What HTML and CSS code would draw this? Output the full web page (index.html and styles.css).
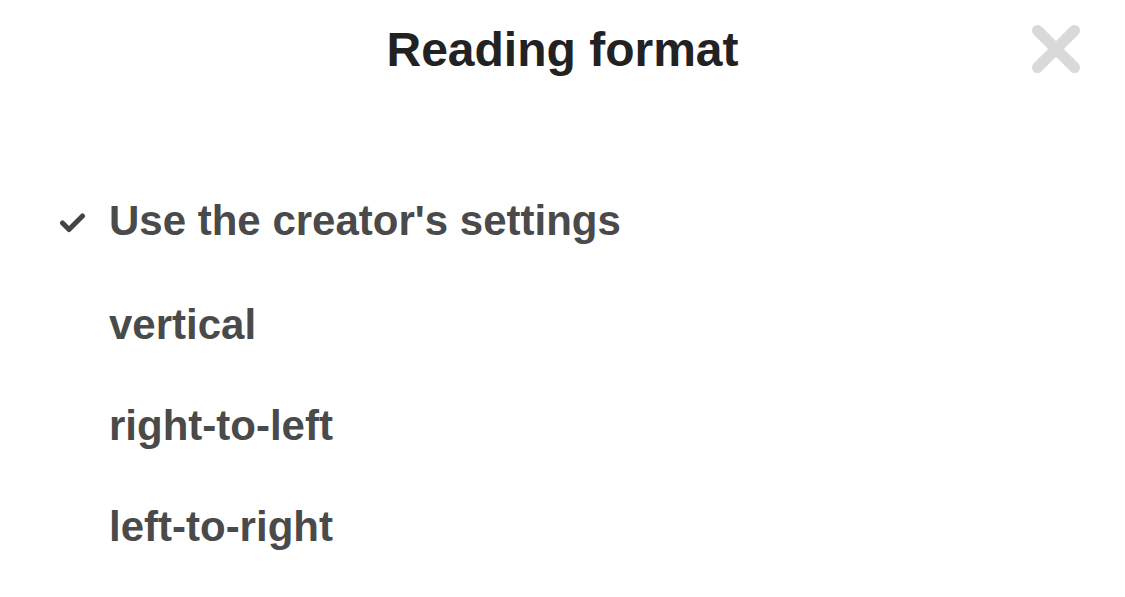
FILE: index.html
```html
<!DOCTYPE html>
<html>
<head>
	<title>Reading format</title>
	<link rel="stylesheet" href="styles.css">
</head>
<body>
	<div class="sheet">
		<header class="sheet-header">
			<span></span>
			<h1>Reading format</h1>
			<button type="button" class="close" aria-label="Close">
				<svg width="48" height="48" viewBox="0 0 48 48">
					<path d="M5.5 5.5 L42.5 42.5 M42.5 5.5 L5.5 42.5" />
				</svg>
			</button>
		</header>

		<ul class="options">
			<li class="option selected">
				<span class="mark">
					<svg width="27" height="21" viewBox="0 0 27 21">
						<path d="M3.5 11 L10 17.5 L23.5 4" />
					</svg>
				</span>
				Use the creator's settings
			</li>
			<li class="option"><span class="mark"></span>vertical</li>
			<li class="option"><span class="mark"></span>right-to-left</li>
			<li class="option"><span class="mark"></span>left-to-right</li>
		</ul>
	</div>
</body>
</html>
```

FILE: styles.css
```css
body {
	margin: 0;
	background-color: #fff;
	font-family: "Liberation Sans", Arial, sans-serif;
	color: #4a4a4a;
}

.sheet-header {
	display: grid;
	grid-template-columns: 1fr auto 1fr;
	align-items: start;
	padding-top: 26px;
}

.sheet-header h1 {
	margin: 0;
	font-size: 48px;
	line-height: 48px;
	font-weight: 700;
	color: #222;
}

.close {
	justify-self: end;
	margin: -1px 45px 0 0;
	padding: 0;
	border: none;
	background: none;
	cursor: pointer;
	line-height: 0;
}

.close path {
	fill: none;
	stroke: #d9d9d9;
	stroke-width: 11;
	stroke-linecap: round;
}

.options {
	list-style: none;
	margin: 0;
	padding: 96px 0 0 0;
}

.option {
	display: flex;
	align-items: center;
	height: 101px;
	padding-left: 59px;
	font-size: 42px;
	font-weight: 700;
	cursor: pointer;
}

.option.selected {
	margin-bottom: 3px;
}

.mark {
	display: inline-flex;
	width: 27px;
	margin-right: 23px;
	padding-top: 4px;
}

.mark path {
	fill: none;
	stroke: #444;
	stroke-width: 5;
	stroke-linecap: round;
	stroke-linejoin: round;
}
```
